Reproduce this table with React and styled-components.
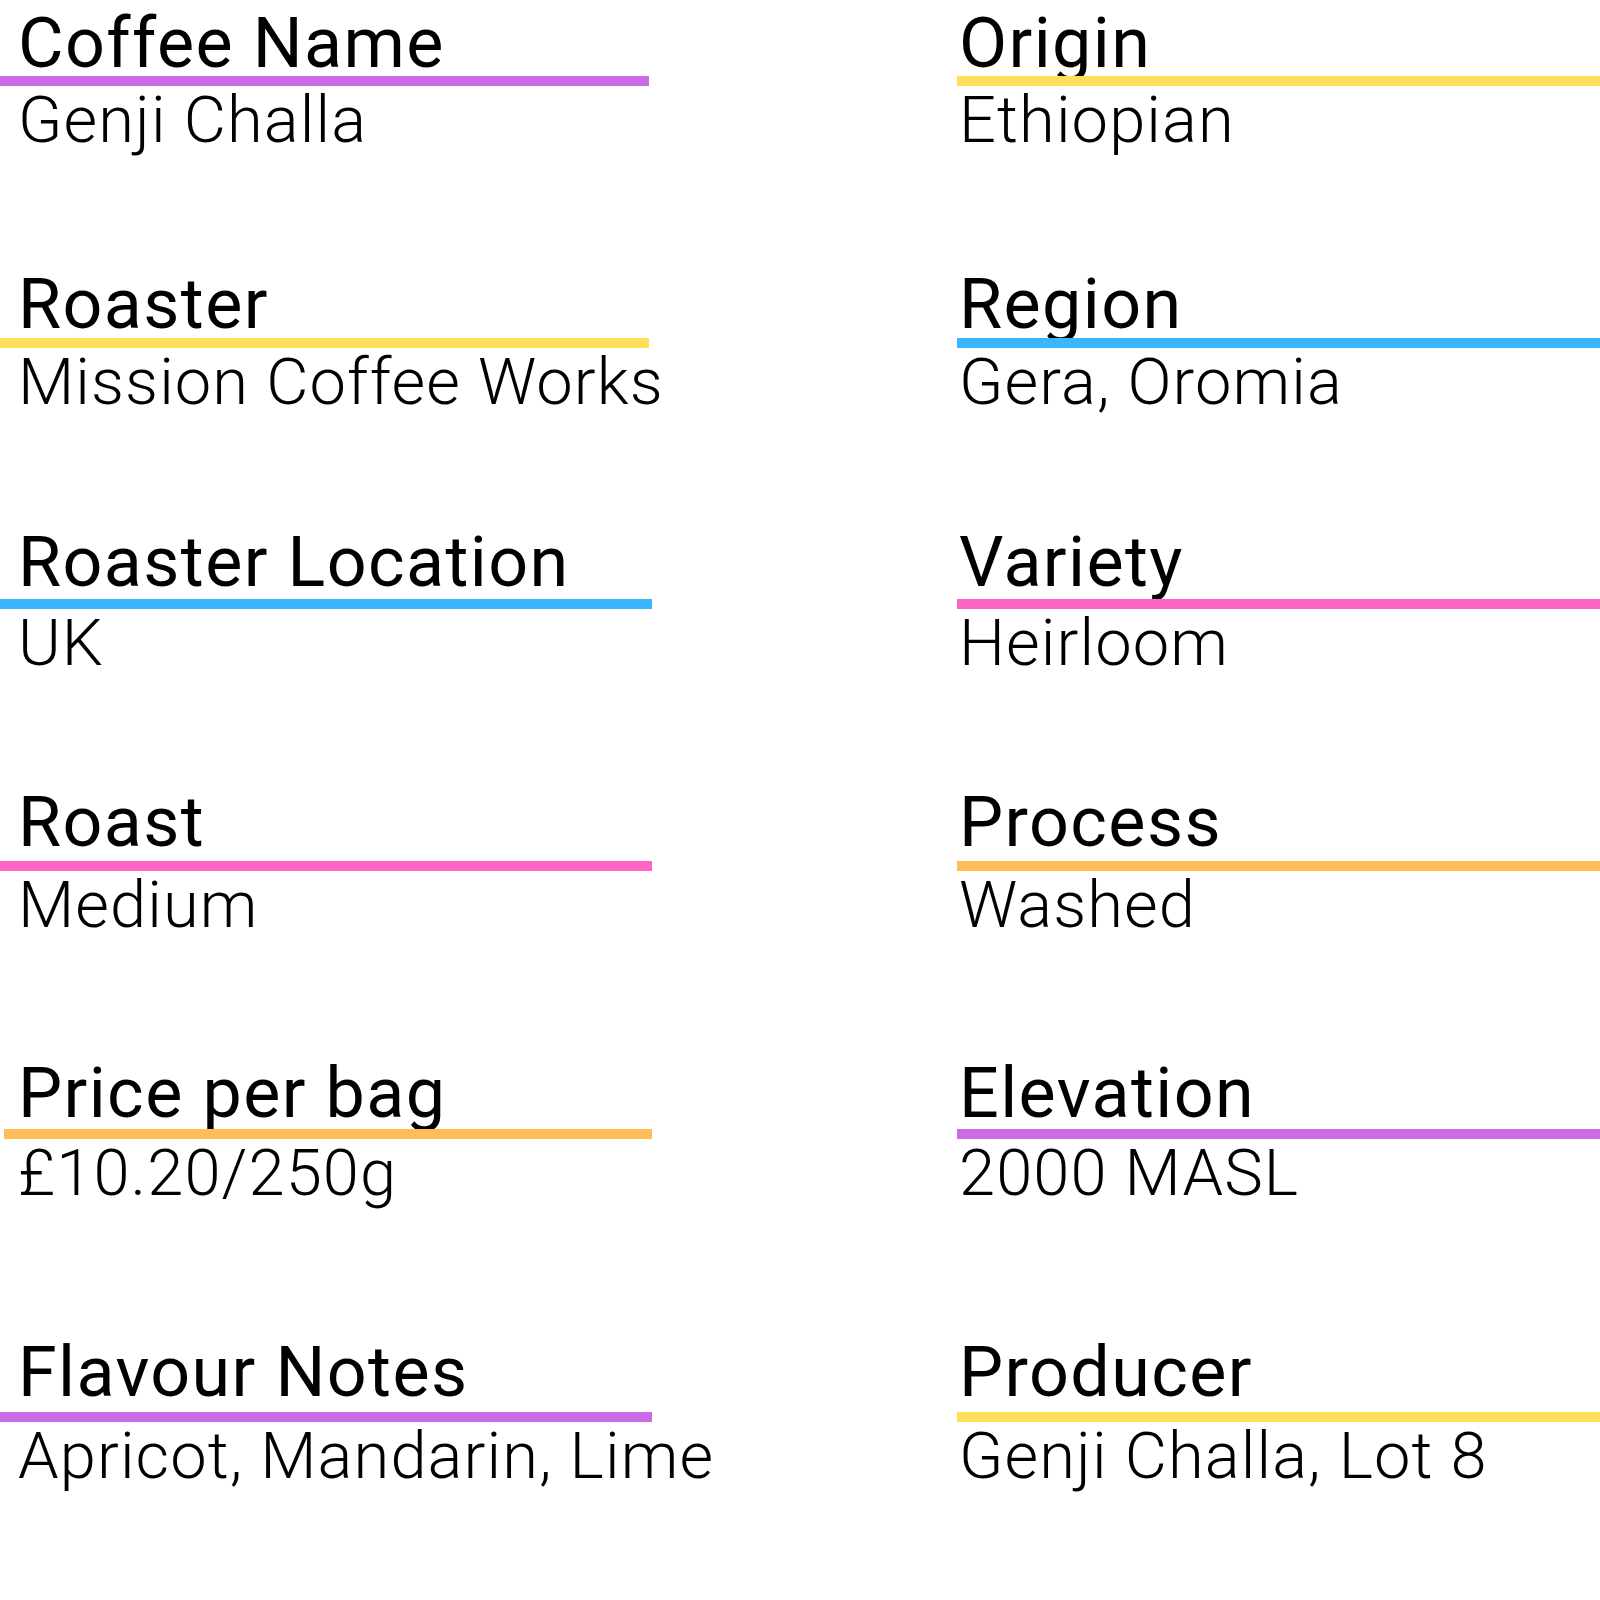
import React from "react";
import styled, { createGlobalStyle } from "styled-components";

const GlobalStyle = createGlobalStyle`
  html, body {
    margin: 0;
    padding: 0;
    background: #ffffff;
  }
  body {
    font-family: Roboto, "Open Sans", "Liberation Sans", sans-serif;
    color: #000000;
  }
`;

const Sheet = styled.div`
  width: 1600px;
  height: 1600px;
  display: grid;
  grid-template-columns: 653px 1fr;
  grid-template-rows: 262px 261px 262px 268px 283px auto;
  grid-auto-flow: column;
  column-gap: 304px;
  background: #ffffff;
`;

const Field = styled.div`
  display: flex;
  flex-direction: column;
  align-items: stretch;
  min-width: 0;
`;

const Label = styled.div`
  box-sizing: border-box;
  height: 76px;
  padding-top: ${(p) => 8 - p.$lift}px;
  padding-left: ${(p) => p.$indent}px;
  font-size: 70px;
  line-height: 70px;
  font-weight: 400;
  letter-spacing: 1.4px;
  white-space: nowrap;
`;

const Bar = styled.div`
  height: 10px;
  margin-left: ${(p) => p.$start || 0}px;
  margin-right: ${(p) => p.$end || 0}px;
  background: ${(p) => p.$color};
`;

const Value = styled.div`
  padding-top: 2px;
  padding-left: ${(p) => p.$indent}px;
  font-size: 65px;
  line-height: 65px;
  font-weight: 300;
  letter-spacing: 1.1px;
  white-space: nowrap;
`;

const C = {
  purple: "#cb6ce6",
  yellow: "#ffde59",
  blue: "#38b6ff",
  pink: "#ff66c4",
  orange: "#ffbd59",
};

const lifts = [0, 1, 4, 6, 3, 7];

const left = [
  { label: "Coffee Name", value: "Genji Challa", color: C.purple, start: 0, end: 4 },
  { label: "Roaster", value: "Mission Coffee Works", color: C.yellow, start: 0, end: 4 },
  { label: "Roaster Location", value: "UK", color: C.blue, start: 0, end: 1 },
  { label: "Roast", value: "Medium", color: C.pink, start: 0, end: 1 },
  { label: "Price per bag", value: "£10.20/250g", color: C.orange, start: 4, end: 1 },
  { label: "Flavour Notes", value: "Apricot, Mandarin, Lime", color: C.purple, start: 0, end: 1 },
];

const right = [
  { label: "Origin", value: "Ethiopian", color: C.yellow },
  { label: "Region", value: "Gera, Oromia", color: C.blue },
  { label: "Variety", value: "Heirloom", color: C.pink },
  { label: "Process", value: "Washed", color: C.orange },
  { label: "Elevation", value: "2000 MASL", color: C.purple },
  { label: "Producer", value: "Genji Challa, Lot 8", color: C.yellow },
];

function Entry({ item, indent, lift }) {
  return (
    <Field>
      <Label $indent={indent} $lift={lift}>
        {item.label}
      </Label>
      <Bar $color={item.color} $start={item.start} $end={item.end} />
      <Value $indent={indent}>{item.value}</Value>
    </Field>
  );
}

export default function App() {
  return (
    <>
      <GlobalStyle />
      <Sheet>
        {left.map((item, i) => (
          <Entry key={item.label} item={item} indent={18} lift={lifts[i]} />
        ))}
        {right.map((item, i) => (
          <Entry key={item.label} item={item} indent={2} lift={lifts[i]} />
        ))}
      </Sheet>
    </>
  );
}
